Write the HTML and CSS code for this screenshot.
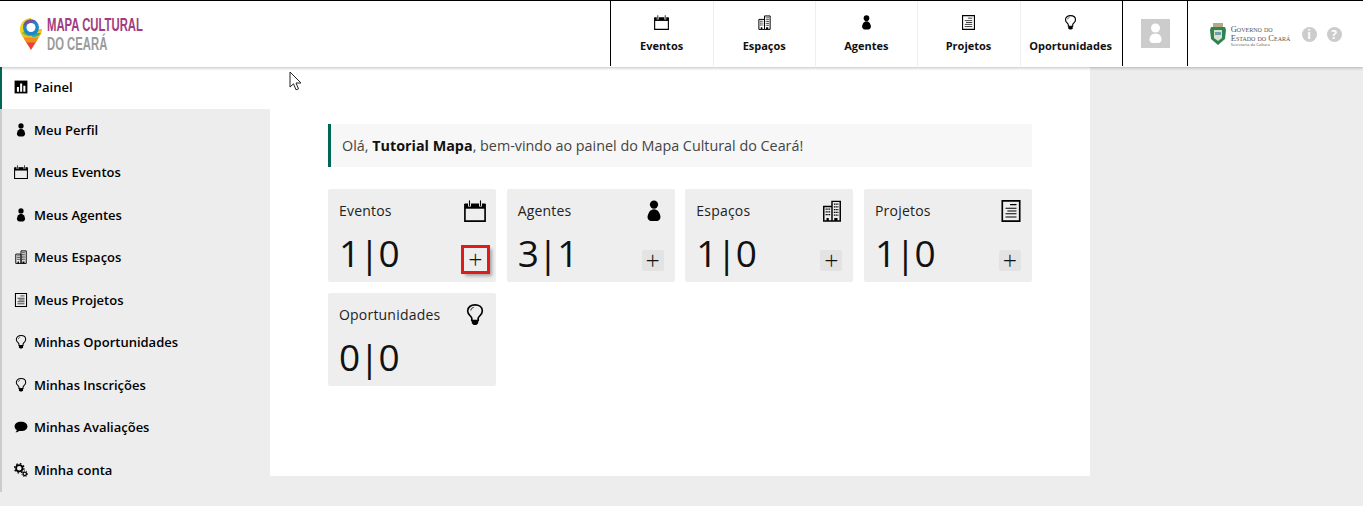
FILE: index.html
```html
<!DOCTYPE html>
<html lang="pt-BR">
<head>
    <meta charset="UTF-8">
    <meta name="viewport" content="width=device-width, initial-scale=1.0">
    <title>Painel - Mapa Cultural do Ceará</title>
    <link rel="stylesheet" href="styles.css">
</head>
<body>
    <svg class="sprites" width="0" height="0" aria-hidden="true">
        <symbol id="i-evento" viewBox="0 0 24 24">
            <path d="M1 5h22v18H1z" fill="none" stroke="#000" stroke-width="1.800"/>
            <path d="M1 4h22v5.500H1z" fill="#000"/>
            <path d="M6 1v6M18 1v6" stroke="#eee" stroke-width="3.200"/>
            <path d="M6 1v5M18 1v5" stroke="#000" stroke-width="1.200" stroke-linecap="round"/>
        </symbol>
        <symbol id="i-espaco" viewBox="0 0 24 24">
            <path d="M3 7h9v16H3zM12 1.500h9V23h-9z" fill="none" stroke="#000" stroke-width="1.600"/>
            <path d="M5 10h5M5 13h5M5 16h5M14 4.500h5M14 7.500h5M14 10.500h5M14 13.500h5M14 16.500h5" stroke="#000" stroke-width="1.400" stroke-dasharray="1.400 .5"/>
            <path d="M6 23v-3.500h2.500V23zM14.500 23v-3.500H18V23z" fill="#000"/>
        </symbol>
        <symbol id="i-agente" viewBox="0 0 24 24">
            <circle cx="12" cy="5" r="4.500" fill="#000"/>
            <path d="M12 10c-4 0-6.500 4-7 8-.3 3 2 5 4 5h6c2 0 4.300-2 4-5-.5-4-3-8-7-8z" fill="#000"/>
        </symbol>
        <symbol id="i-projeto" viewBox="0 0 24 24">
            <path d="M2.500 1h19v22h-19z" fill="none" stroke="#000" stroke-width="1.800"/>
            <path d="M11 5h7M6 9h12M8 12h10M6 15h12M6 18.500h12" stroke="#000" stroke-width="1.200"/>
        </symbol>
        <symbol id="i-oportunidade" viewBox="0 0 24 24">
            <path d="M8.500 18v-2.500c0-2-4.500-3.500-4.500-8C4 3.500 7.500 1 12 1s8 2.500 8 6.500c0 4.500-4.500 6-4.500 8V18z" fill="none" stroke="#000" stroke-width="1.800"/>
            <path d="M8.500 18h7v3l-2 2h-3l-2-2z" fill="#000"/>
            <path d="M7.500 7c0-1.800 1.500-3 3-3.200" fill="none" stroke="#000"/>
        </symbol>
        <symbol id="i-painel" viewBox="0 0 24 24">
            <path d="M1 1h22v22H1z" fill="#000"/>
            <path d="M5 12h3.500v8H5zM10.500 6h3.500v14h-3.500zM16 10h3.500v10H16z" fill="#fff"/>
        </symbol>
        <symbol id="i-avaliacao" viewBox="0 0 24 24">
            <path d="M12 3C5.500 3 1 6.500 1 11c0 2.500 1.500 4.700 4 6.200-.3 1.500-1.200 3-2.500 3.800 2.500 0 4.800-1 6.300-2.300 1 .2 2.100.3 3.200.3 6.500 0 11-3.500 11-8s-4.500-8-11-8z" fill="#000"/>
        </symbol>
        <symbol id="i-conta" viewBox="0 0 24 24">
            <circle cx="9" cy="9" r="5.500" fill="none" stroke="#000" stroke-width="3"/>
            <circle cx="9" cy="9" r="8" fill="none" stroke="#000" stroke-width="2.400" stroke-dasharray="2.800 3.480"/>
            <circle cx="18.500" cy="18.500" r="3" fill="none" stroke="#000" stroke-width="2.200"/>
            <circle cx="18.500" cy="18.500" r="5" fill="none" stroke="#000" stroke-width="1.600" stroke-dasharray="2 2.200"/>
        </symbol>
    </svg>

    <header class="topo">
        <a class="logo" href="#">
            <svg class="logo-pino" viewBox="0 0 24 34" width="24" height="34">
                <path d="M12 33 7 25h10z" fill="#e8403a"/>
                <path d="M4 20l3 5.500h10l3-5.500z" fill="#f28c1e"/>
                <path d="M1 12c0 3.500 1.500 6 3 8.500h16c1.500-2.500 3-5 3-8.500z" fill="#f3c31c"/>
                <path d="M1 12C1 6 5.500 1 12 1v11L5 18c-2.500-1.500-4-3-4-6z" fill="#f0d21c"/>
                <path d="M3 16c3 3 7 4 11 2.500L12 10z" fill="#79b648"/>
                <path d="M22 16c-1.500 2.500-5 4.500-9 4l1-4z" fill="#2fb08a"/>
                <circle cx="12" cy="10.500" r="8" fill="#1f86c9"/>
                <path d="M4.300 8.500C5 4.500 8 2.500 12 2.500c2 0 3.500.5 4.800 1.500L12 6z" fill="#7a4fa0"/>
                <circle cx="12" cy="10.500" r="4.500" fill="#fff"/>
            </svg>
            <span class="logo-texto">
                <span class="logo-mapa">MAPA CULTURAL</span>
                <span class="logo-ceara">DO CEARÁ</span>
            </span>
        </a>

        <nav class="menu">
            <a class="menu-item" href="#"><svg class="icone-menu"><use href="#i-evento"/></svg>Eventos</a>
            <a class="menu-item" href="#"><svg class="icone-menu"><use href="#i-espaco"/></svg>Espaços</a>
            <a class="menu-item" href="#"><svg class="icone-menu"><use href="#i-agente"/></svg>Agentes</a>
            <a class="menu-item" href="#"><svg class="icone-menu"><use href="#i-projeto"/></svg>Projetos</a>
            <a class="menu-item" href="#"><svg class="icone-menu"><use href="#i-oportunidade"/></svg>Oportunidades</a>
        </nav>

        <div class="usuario">
            <div class="avatar">
                <svg viewBox="0 0 29 29" width="29" height="29">
                    <circle cx="14.500" cy="9" r="4.500" fill="#fff"/>
                    <path d="M14.500 14.500c-4 0-6 3-6 6 0 2 1.500 3.500 3 3.500h6c1.500 0 3-1.500 3-3.500 0-3-2-6-6-6z" fill="#fff"/>
                </svg>
            </div>
        </div>

        <div class="governo">
            <svg class="brasao" viewBox="0 0 16 22" width="16" height="22">
                <path d="M3 0h10v4H3z" fill="#b5a98a"/>
                <path d="M1 4h14l1 3-1 9-7 6-7-6-1-9z" fill="#2f8353"/>
                <path d="M4 7h8v8l-4 3-4-3z" fill="#d9e3c8"/>
                <path d="M5 9h6v3H5z" fill="#6a9fb0"/>
            </svg>
            <div class="governo-texto">
                <span class="governo-nome">Governo do<br>Estado do Ceará</span>
                <span class="governo-sec">Secretaria da Cultura</span>
            </div>
            <span class="ajuda">i</span>
            <span class="ajuda">?</span>
        </div>
    </header>

    <div class="pagina">
        <aside class="lateral">
            <a class="lateral-item ativo" href="#"><svg class="icone-lateral"><use href="#i-painel"/></svg>Painel</a>
            <a class="lateral-item" href="#"><svg class="icone-lateral"><use href="#i-agente"/></svg>Meu Perfil</a>
            <a class="lateral-item" href="#"><svg class="icone-lateral"><use href="#i-evento"/></svg>Meus Eventos</a>
            <a class="lateral-item" href="#"><svg class="icone-lateral"><use href="#i-agente"/></svg>Meus Agentes</a>
            <a class="lateral-item" href="#"><svg class="icone-lateral"><use href="#i-espaco"/></svg>Meus Espaços</a>
            <a class="lateral-item" href="#"><svg class="icone-lateral"><use href="#i-projeto"/></svg>Meus Projetos</a>
            <a class="lateral-item" href="#"><svg class="icone-lateral"><use href="#i-oportunidade"/></svg>Minhas Oportunidades</a>
            <a class="lateral-item" href="#"><svg class="icone-lateral"><use href="#i-oportunidade"/></svg>Minhas Inscrições</a>
            <a class="lateral-item" href="#"><svg class="icone-lateral"><use href="#i-avaliacao"/></svg>Minhas Avaliações</a>
            <a class="lateral-item" href="#"><svg class="icone-lateral"><use href="#i-conta"/></svg>Minha conta</a>
        </aside>

        <main class="conteudo">
            <p class="boas-vindas">Olá, <strong>Tutorial Mapa</strong>, bem-vindo ao painel do Mapa Cultural do Ceará!</p>

            <section class="cartoes">
                <div class="cartao">
                    <div class="cartao-topo">
                        <span>Eventos</span>
                        <svg class="icone-cartao"><use href="#i-evento"/></svg>
                    </div>
                    <div class="cartao-base">
                        <span class="contagem">1|0</span>
                        <button class="adicionar marcado">+</button>
                    </div>
                </div>
                <div class="cartao">
                    <div class="cartao-topo">
                        <span>Agentes</span>
                        <svg class="icone-cartao"><use href="#i-agente"/></svg>
                    </div>
                    <div class="cartao-base">
                        <span class="contagem">3|1</span>
                        <button class="adicionar">+</button>
                    </div>
                </div>
                <div class="cartao">
                    <div class="cartao-topo">
                        <span>Espaços</span>
                        <svg class="icone-cartao"><use href="#i-espaco"/></svg>
                    </div>
                    <div class="cartao-base">
                        <span class="contagem">1|0</span>
                        <button class="adicionar">+</button>
                    </div>
                </div>
                <div class="cartao">
                    <div class="cartao-topo">
                        <span>Projetos</span>
                        <svg class="icone-cartao"><use href="#i-projeto"/></svg>
                    </div>
                    <div class="cartao-base">
                        <span class="contagem">1|0</span>
                        <button class="adicionar">+</button>
                    </div>
                </div>
                <div class="cartao">
                    <div class="cartao-topo">
                        <span>Oportunidades</span>
                        <svg class="icone-cartao"><use href="#i-oportunidade"/></svg>
                    </div>
                    <div class="cartao-base">
                        <span class="contagem">0|0</span>
                    </div>
                </div>
            </section>
        </main>
    </div>

    <!-- ponteiro do mouse que aparece na captura -->
    <svg class="ponteiro" viewBox="0 0 14 20" width="14" height="20">
        <path d="M1 1v15l3.500-3.200 2.500 6 2.500-1-2.500-5.800H12z" fill="#fff" stroke="#222" stroke-width="1"/>
    </svg>
</body>
</html>
```

FILE: styles.css
```css
* {
    box-sizing: border-box;
}

html, body {
    height: 506px;
    overflow: hidden;
}

body {
    font-family: "Open Sans", Arial, sans-serif;
    background-color: #ededed;
    color: #000000;
    margin: 0;
    padding: 0;
}

a {
    color: inherit;
    text-decoration: none;
}

.sprites {
    position: absolute;
}

.ponteiro {
    position: absolute;
    left: 289px;
    top: 71px;
}

/* topo */
.topo {
    display: flex;
    height: 67px;
    background-color: #ffffff;
    border-top: 1px solid #000000;
    box-shadow: 0 1px 3px rgba(0, 0, 0, 0.25);
    position: relative;
}

.logo {
    display: flex;
    align-items: center;
    gap: 4px;
    width: 610px;
    padding: 0 0 0 19px;
}

.logo-texto {
    display: flex;
    flex-direction: column;
    font-family: "Liberation Sans", sans-serif;
    font-weight: bold;
    font-size: 19px;
    line-height: 19px;
    transform: scaleX(0.595);
    transform-origin: left center;
    white-space: nowrap;
}

.logo-mapa {
    color: #a03c82;
}

.logo-ceara {
    color: #9b9b9b;
}

.menu {
    display: flex;
    border-left: 1px solid #000000;
    height: 65px;
}

.menu-item {
    width: 102.150px;
    display: flex;
    flex-direction: column;
    align-items: center;
    padding: 14px 1px 0 0;
    font-size: 11px;
    font-weight: 700;
    line-height: 15px;
    color: #111111;
    border-left: 1px solid #eeeeee;
}

.menu-item:first-child {
    border-left: none;
}

.icone-menu {
    width: 15px;
    height: 15px;
    margin-bottom: 8px;
}

.usuario {
    width: 66px;
    height: 65px;
    border-left: 1px solid #000000;
    border-right: 1px solid #000000;
    padding: 18px 0 0 18px;
}

.avatar {
    width: 29px;
    height: 29px;
    background-color: #cccccc;
}

.governo {
    flex: 1;
    display: flex;
    align-items: flex-start;
    padding: 22px 0 0 22px;
}

.brasao {
    margin-right: 5px;
}

.governo-texto {
    width: 71px;
    display: flex;
    flex-direction: column;
    color: #555555;
    font-family: "Liberation Serif", serif;
}

.governo-nome {
    font-size: 8.500px;
    line-height: 8.500px;
    font-variant: small-caps;
    margin-top: 2px;
    white-space: nowrap;
}

.governo-sec {
    font-family: "Open Sans", sans-serif;
    font-size: 4px;
    line-height: 6px;
    white-space: nowrap;
}

.ajuda {
    width: 15px;
    height: 15px;
    border-radius: 50%;
    background-color: #cccccc;
    color: #ffffff;
    font-size: 12px;
    font-weight: 700;
    line-height: 15px;
    text-align: center;
    margin: 4px 10px 0 0;
}

/* corpo */
.pagina {
    display: flex;
    align-items: flex-start;
}

.lateral {
    width: 270px;
    border-left: 2px solid #cccccc;
    background-color: #ededed;
}

.lateral-item {
    display: flex;
    align-items: center;
    height: 42.500px;
    padding: 0 0 2px 12px;
    gap: 6px;
    font-size: 13px;
    font-weight: 600;
    color: #000000;
}

.lateral-item.ativo {
    height: 42px;
    margin-bottom: 0.500px;
    background-color: #ffffff;
    margin-left: -2px;
    border-left: 2px solid #006655;
}

.icone-lateral {
    width: 14px;
    height: 14px;
}

.conteudo {
    width: 820px;
    height: 409px;
    background-color: #ffffff;
    padding: 57px 58px 0;
}

.boas-vindas {
    margin: 0 0 22px;
    height: 43px;
    line-height: 43px;
    padding-left: 11px;
    font-size: 14.350px;
    color: #444444;
    background-color: #f7f7f7;
    border-left: 3px solid #006655;
}

.boas-vindas strong {
    color: #111111;
}

.cartoes {
    display: grid;
    grid-template-columns: repeat(4, 1fr);
    column-gap: 10.670px;
    row-gap: 11px;
}

.cartao {
    height: 93px;
    padding: 11px;
    background-color: #eeeeee;
    border-radius: 2px;
    display: flex;
    flex-direction: column;
    justify-content: space-between;
}

.cartao-topo {
    display: flex;
    justify-content: space-between;
    font-size: 14px;
    letter-spacing: 0.200px;
    line-height: 22px;
    color: #222222;
}

.icone-cartao {
    width: 22px;
    height: 22px;
    margin-right: -1px;
}

.cartao-base {
    display: flex;
    justify-content: space-between;
    align-items: flex-end;
}

.contagem {
    font-size: 37px;
    line-height: 34px;
    color: #111111;
    letter-spacing: -1px;
    margin-bottom: 1px;
}

.adicionar {
    width: 22px;
    height: 21px;
    padding: 0;
    border: none;
    border-radius: 2px;
    background-color: #e3e3e3;
    color: #111111;
    font-family: "Open Sans", sans-serif;
    font-size: 25px;
    font-weight: 300;
    line-height: 21px;
}

.marcado {
    width: 23px;
    height: 23px;
    margin-right: -2px;
    border-radius: 0;
    background-color: #eeeeee;
    outline: 3px solid #e01b1b;
    box-shadow: 3px 3px 3px 2px rgba(0, 0, 0, 0.3);
}
```
